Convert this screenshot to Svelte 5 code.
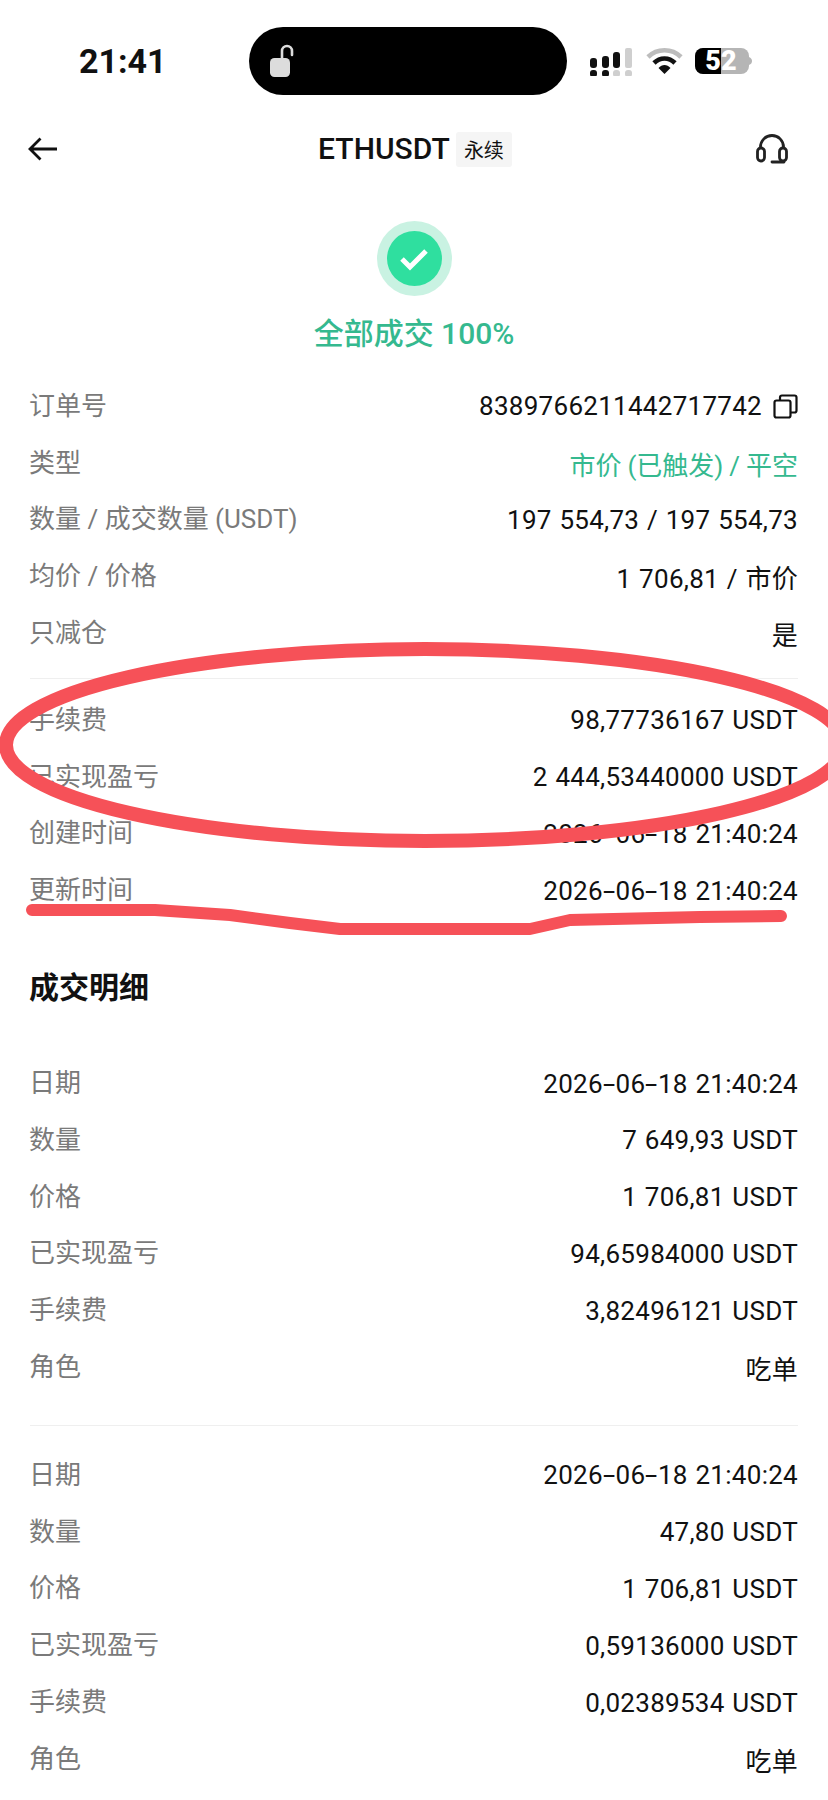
<script lang="ts">
  interface Row {
    label: string
    value: string
    accent?: boolean
    copy?: boolean
  }

  const orderRows: Row[] = [
    { label: '订单号', value: '8389766211442717742', copy: true },
    { label: '类型', value: '市价 (已触发) / 平空', accent: true },
    { label: '数量 / 成交数量 (USDT)', value: '197 554,73 / 197 554,73' },
    { label: '均价 / 价格', value: '1 706,81 / 市价' },
    { label: '只减仓', value: '是' },
  ]

  const feeRows: Row[] = [
    { label: '手续费', value: '98,77736167 USDT' },
    { label: '已实现盈亏', value: '2 444,53440000 USDT' },
    { label: '创建时间', value: '2026-06-18 21:40:24' },
    { label: '更新时间', value: '2026-06-18 21:40:24' },
  ]

  const fills: Row[][] = [
    [
      { label: '日期', value: '2026-06-18 21:40:24' },
      { label: '数量', value: '7 649,93 USDT' },
      { label: '价格', value: '1 706,81 USDT' },
      { label: '已实现盈亏', value: '94,65984000 USDT' },
      { label: '手续费', value: '3,82496121 USDT' },
      { label: '角色', value: '吃单' },
    ],
    [
      { label: '日期', value: '2026-06-18 21:40:24' },
      { label: '数量', value: '47,80 USDT' },
      { label: '价格', value: '1 706,81 USDT' },
      { label: '已实现盈亏', value: '0,59136000 USDT' },
      { label: '手续费', value: '0,02389534 USDT' },
      { label: '角色', value: '吃单' },
    ],
  ]
</script>

{#snippet rows(list: Row[])}
  {#each list as row}
    <div class="row">
      <span class="label">{row.label}</span>
      <div class="value" class:accent={row.accent}>
        <span>{#each row.value.split('-') as part, j}{#if j}<span class="dash">-</span>{/if}{part}{/each}</span>
        {#if row.copy}
          <svg width="25" height="25" viewBox="0 0 25 25" fill="none" stroke="#111" stroke-width="2.2">
            <rect x="1.5" y="6.5" width="16" height="17" rx="2" />
            <path d="M7 6.5V3.5a2 2 0 0 1 2-2h12.5a2 2 0 0 1 2 2v13a2 2 0 0 1-2 2h-4" />
          </svg>
        {/if}
      </div>
    </div>
  {/each}
{/snippet}

<div class="page">
  <div class="status">
    <span class="time">21:41</span>
    <div class="island">
      <svg width="28" height="34" viewBox="0 0 28 34">
        <rect x="1" y="14" width="20" height="19" rx="4.5" fill="#dcdcdc" />
        <path d="M13 15V7a5 5 0 0 1 10 0v4" fill="none" stroke="#dcdcdc" stroke-width="2.6" stroke-linecap="round" />
      </svg>
    </div>
    <div class="status-icons">
      <svg width="46" height="30" viewBox="0 0 46 30">
        <rect x="1" y="12" width="7" height="10" rx="3" fill="#111" />
        <rect x="13" y="10" width="7" height="12" rx="3" fill="#111" />
        <rect x="24" y="6" width="7" height="16" rx="3" fill="#111" />
        <rect x="36" y="2" width="7" height="20" rx="2" fill="#cfcfcf" />
        <rect x="1" y="24" width="7" height="7" rx="3" fill="#111" />
        <rect x="13" y="24" width="7" height="7" rx="3" fill="#111" />
        <rect x="24" y="24" width="7" height="7" rx="3" fill="#cfcfcf" />
        <rect x="36" y="24" width="7" height="7" rx="3" fill="#cfcfcf" />
      </svg>
      <svg width="37" height="28" viewBox="0 0 37 28">
        <path d="M2 10C11 1 26 1 35 10" fill="none" stroke="#bdbdbd" stroke-width="4.6" />
        <path d="M8 16C14 10 23 10 29 16" fill="none" stroke="#111" stroke-width="4.6" />
        <path d="M12.5 21C16 17 21 17 24.5 21L18.5 27Z" fill="#111" />
      </svg>
      <div class="battery">
        <svg width="58" height="28" viewBox="0 0 58 28">
          <rect x="1" y="1" width="54" height="26" rx="8" fill="#b5b5b5" />
          <path d="M9 1H27V27H9a8 8 0 0 1-8-8V9a8 8 0 0 1 8-8Z" fill="#000" />
          <path d="M55 10c2 1 3 2 3 4s-1 3-3 4Z" fill="#b5b5b5" />
        </svg>
        <span class="batt">52</span>
      </div>
    </div>
  </div>

  <div class="nav">
    <svg width="30" height="24" viewBox="0 0 30 24" fill="none" stroke="#111" stroke-width="2.8">
      <path d="M29 12H2M12.5 1.5 2 12l10.5 10.5" />
    </svg>
    <div class="title">
      <span class="symbol">ETHUSDT</span>
      <span class="tag">永续</span>
    </div>
    <svg width="32" height="30" viewBox="0 0 32 30" fill="none" stroke="#222" stroke-width="2.8">
      <path d="M4.5 14v-1a11.5 11.5 0 0 1 23 0v1" />
      <rect x="1.5" y="14" width="7" height="13" rx="3.4" />
      <rect x="23.5" y="14" width="7" height="13" rx="3.4" />
      <path d="M16 28h12" stroke-linecap="round" />
    </svg>
  </div>

  <div class="result">
    <div class="ring">
      <div class="disc">
        <svg width="32" height="26" viewBox="0 0 32 26" fill="none" stroke="#fff" stroke-width="5">
          <path d="M4 13l8 8L28 5" />
        </svg>
      </div>
    </div>
    <div class="result-text">全部成交 100%</div>
  </div>

  <section class="group">{@render rows(orderRows)}</section>
  <div class="divider first"></div>
  <section class="group">{@render rows(feeRows)}</section>

  <h2 class="heading">成交明细</h2>

  {#each fills as fill, i}
    {#if i > 0}<div class="divider fill"></div>{/if}
    <section class="group">{@render rows(fill)}</section>
  {/each}

  <!-- hand drawn markup on top of the screenshot -->
  <svg class="scribble" width="828" height="1000" viewBox="0 0 828 1000" fill="none" stroke="#f65158">
    <ellipse cx="425" cy="745" rx="419" ry="96" stroke-width="14" />
    <path d="M32 910H155L230 915 290 923 340 929H530L570 920 700 917 781 916" stroke-width="12" stroke-linecap="round" stroke-linejoin="round" />
  </svg>
</div>

<style>
  :global(body) {
    margin: 0;
    background: #fff;
  }

  .page {
    position: relative;
    width: 828px;
    height: 1800px;
    overflow: hidden;
    background: #fff;
    color: #111;
    font-family: Roboto, "Noto Sans CJK SC", sans-serif;
  }

  .status {
    display: flex;
    align-items: center;
    height: 122px;
    padding-left: 79px;
    box-sizing: border-box;
  }
  .time {
    width: 170px;
    font-size: 34px;
    font-weight: 700;
  }
  .island {
    display: flex;
    align-items: center;
    width: 318px;
    height: 68px;
    padding-left: 20px;
    box-sizing: border-box;
    background: #000;
    border-radius: 34px;
  }
  .status-icons {
    display: flex;
    align-items: center;
    gap: 11px;
    margin-left: 22px;
  }
  .battery {
    position: relative;
    display: flex;
  }
  .batt {
    position: absolute;
    top: 0;
    left: 0;
    width: 54px;
    color: #fff;
    font-size: 27px;
    font-weight: 900;
    line-height: 28px;
    text-align: center;
  }

  .nav {
    display: flex;
    align-items: center;
    justify-content: space-between;
    height: 54px;
    padding: 0 40px 0 28px;
  }
  .title {
    display: flex;
    align-items: center;
    gap: 6px;
    margin-left: 16px;
  }
  .symbol {
    font-size: 30px;
    font-weight: 500;
    line-height: 30px;
  }
  .tag {
    padding: 3px 8px;
    background: #f5f5f5;
    border-radius: 3px;
    font-size: 20px;
  }

  .result {
    display: flex;
    flex-direction: column;
    align-items: center;
    padding-top: 45px;
  }
  .ring {
    display: flex;
    align-items: center;
    justify-content: center;
    width: 75px;
    height: 75px;
    background: #c9f2e2;
    border-radius: 50%;
  }
  .disc {
    display: flex;
    align-items: center;
    justify-content: center;
    width: 55px;
    height: 55px;
    background: #2fdf9f;
    border-radius: 50%;
  }
  .result-text {
    margin-top: 18px;
    color: #35b98f;
    font-size: 30px;
    font-weight: 500;
    line-height: 40px;
  }

  .group {
    padding: 0 30px 0 29px;
  }
  .result + .group {
    margin-top: 23px;
  }
  .row {
    display: flex;
    align-items: center;
    justify-content: space-between;
    height: 56.8px;
    font-size: 26px;
  }
  .label {
    padding-bottom: 4px;
    color: #7a7a7a;
  }
  .value {
    display: flex;
    align-items: center;
    gap: 11px;
    padding-top: 2px;
    color: #111;
    letter-spacing: 0.28px;
    white-space: pre;
    word-spacing: 1px;
  }
  .value.accent {
    color: #35b98f;
    letter-spacing: 0;
    word-spacing: -0.5px;
  }
  .dash {
    display: inline-block;
    padding: 0 2.6px;
    transform: scaleX(1.7);
  }

  .divider {
    height: 1px;
    margin: 0 30px;
    background: #efefef;
  }
  .divider.first {
    margin-top: 17px;
    margin-bottom: 12px;
  }
  .divider.fill {
    margin-top: 30px;
    margin-bottom: 20px;
  }

  .heading {
    margin: 50px 0 46px;
    padding-left: 29px;
    font-size: 30px;
    font-weight: 700;
    line-height: 40px;
  }

  .scribble {
    position: absolute;
    top: 0;
    left: 0;
    pointer-events: none;
  }
</style>
